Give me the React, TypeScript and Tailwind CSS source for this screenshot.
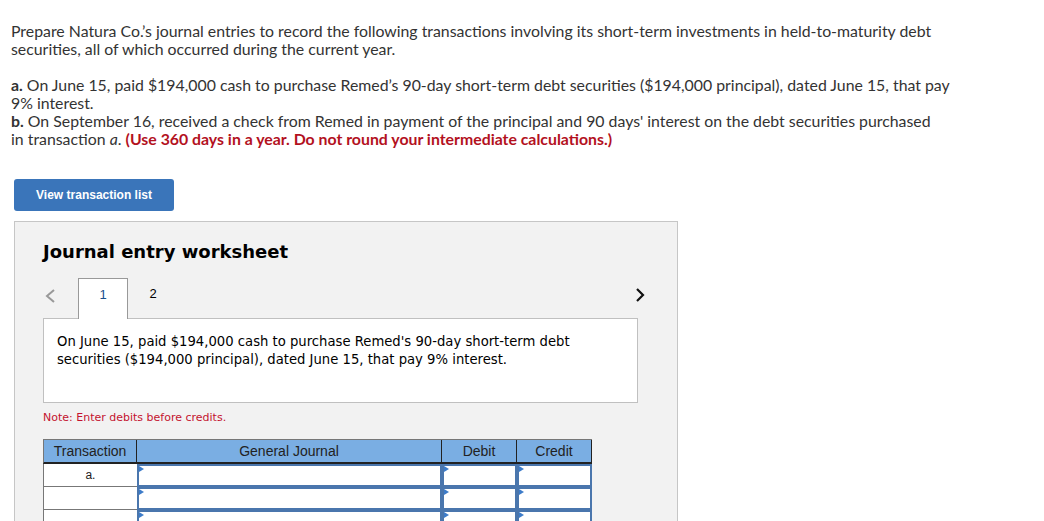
import React from "react";

const Tri = () => (
  <span className="absolute top-0 left-0 w-0 h-0 border-y-[3px] border-y-transparent border-l-[5px] border-l-[#3d7cc9]" />
);

function Row({ label }: { label?: string }) {
  return (
    <div className="flex h-[23px]">
      <div
        className="w-[94px] h-full bg-white border-l border-b border-[#777] flex items-center justify-center text-[12px] text-[#222]"
        style={{ fontFamily: "'Liberation Sans', Arial, sans-serif" }}
      >
        {label}
      </div>
      <div className="relative w-[306px] h-full bg-white border-2 border-[#4a76ad]">
        <Tri />
      </div>
      <div className="relative w-[75px] h-full bg-white border-2 border-[#4a76ad]">
        <Tri />
      </div>
      <div className="relative w-[75px] h-full bg-white border-2 border-[#4a76ad]">
        <Tri />
      </div>
    </div>
  );
}

const verdana = { fontFamily: "'DejaVu Sans', sans-serif" };
const arial = { fontFamily: "'Liberation Sans', Arial, sans-serif" };

export default function App() {
  return (
    <div
      className="h-[521px] overflow-hidden bg-white pl-[11px] pt-[22px] text-[15.85px] leading-[18px] text-[#333]"
      style={{ fontFamily: "Lato, 'Open Sans', sans-serif" }}
    >
      <p>
        Prepare Natura Co.’s journal entries to record the following transactions involving its short-term investments in held-to-maturity debt
        <br />
        securities, all of which occurred during the current year.
      </p>
      <p className="mt-[18px]">
        <b>a.</b> On June 15, paid $194,000 cash to purchase Remed’s 90-day short-term debt securities ($194,000 principal), dated June 15, that pay
        <br />
        9% interest.
        <br />
        <b>b.</b> On September 16, received a check from Remed in payment of the principal and 90 days' interest on the debt securities purchased
        <br />
        in transaction <i>a</i>. <b className="text-[#b3111e]">(Use 360 days in a year. Do not round your intermediate calculations.)</b>
      </p>

      <button
        className="mt-[31px] ml-[3px] w-[160px] h-[32px] rounded-[3px] bg-[#3a75ba] text-white text-[12px] font-bold block"
        style={arial}
      >
        View transaction list
      </button>

      <div
        className="mt-[10px] ml-[3px] w-[664px] h-[400px] bg-[#f2f2f2] border border-[#c6c6c6] pl-[28px] pt-[19px]"
        style={verdana}
      >
        <h2 className="text-[18px] leading-[22px] font-bold text-black">Journal entry worksheet</h2>

        <div className="relative mt-[15px] w-[595px] h-[40px] flex items-end">
          <div className="w-[35px] h-full flex items-center">
            <svg width="14" height="16" viewBox="0 0 14 16" className="mt-[-4px]">
              <polyline points="11,2 4,8 11,14" fill="none" stroke="#999" strokeWidth="2" />
            </svg>
          </div>
          <div
            className="relative z-10 w-[50px] h-[41px] -mb-[1px] bg-white border-t border-x border-[#999] flex items-center justify-center text-[13px] text-[#1a4f8c] pb-[8px]"
            style={arial}
          >
            1
          </div>
          <div
            className="w-[50px] h-full flex items-center justify-center text-[13px] text-black pb-[8px]"
            style={arial}
          >
            2
          </div>
          <div className="absolute right-[-8px] top-[9px]">
            <svg width="12" height="16" viewBox="0 0 12 16">
              <polyline points="3,2 9,8 3,14" fill="none" stroke="#111" strokeWidth="2.2" />
            </svg>
          </div>
        </div>

        <div className="w-[595px] h-[85px] bg-white border border-[#c0c0c0] pl-[13px] pt-[14px] text-[13.2px] leading-[18px] text-black">
          On June 15, paid $194,000 cash to purchase Remed's 90-day short-term debt
          <br />
          securities ($194,000 principal), dated June 15, that pay 9% interest.
        </div>

        <p className="mt-[8px] text-[11px] leading-[14px] text-[#c4122f]">Note: Enter debits before credits.</p>

        <div className="mt-[14px] w-[549px]" style={arial}>
          <div className="flex h-[25px] bg-[#7aaee3] border-t border-l border-[#777] border-b-2 border-b-[#222] text-[14px] text-[#222]">
            <div className="w-[93px] flex items-center justify-center border-r border-[#222]">Transaction</div>
            <div className="w-[305px] flex items-center justify-center border-r border-[#222]">General Journal</div>
            <div className="w-[75px] flex items-center justify-center border-r border-[#222]">Debit</div>
            <div className="w-[75px] flex items-center justify-center border-r border-[#222]">Credit</div>
          </div>
          <Row label="a." />
          <Row />
          <Row />
          <Row />
        </div>
      </div>
    </div>
  );
}
